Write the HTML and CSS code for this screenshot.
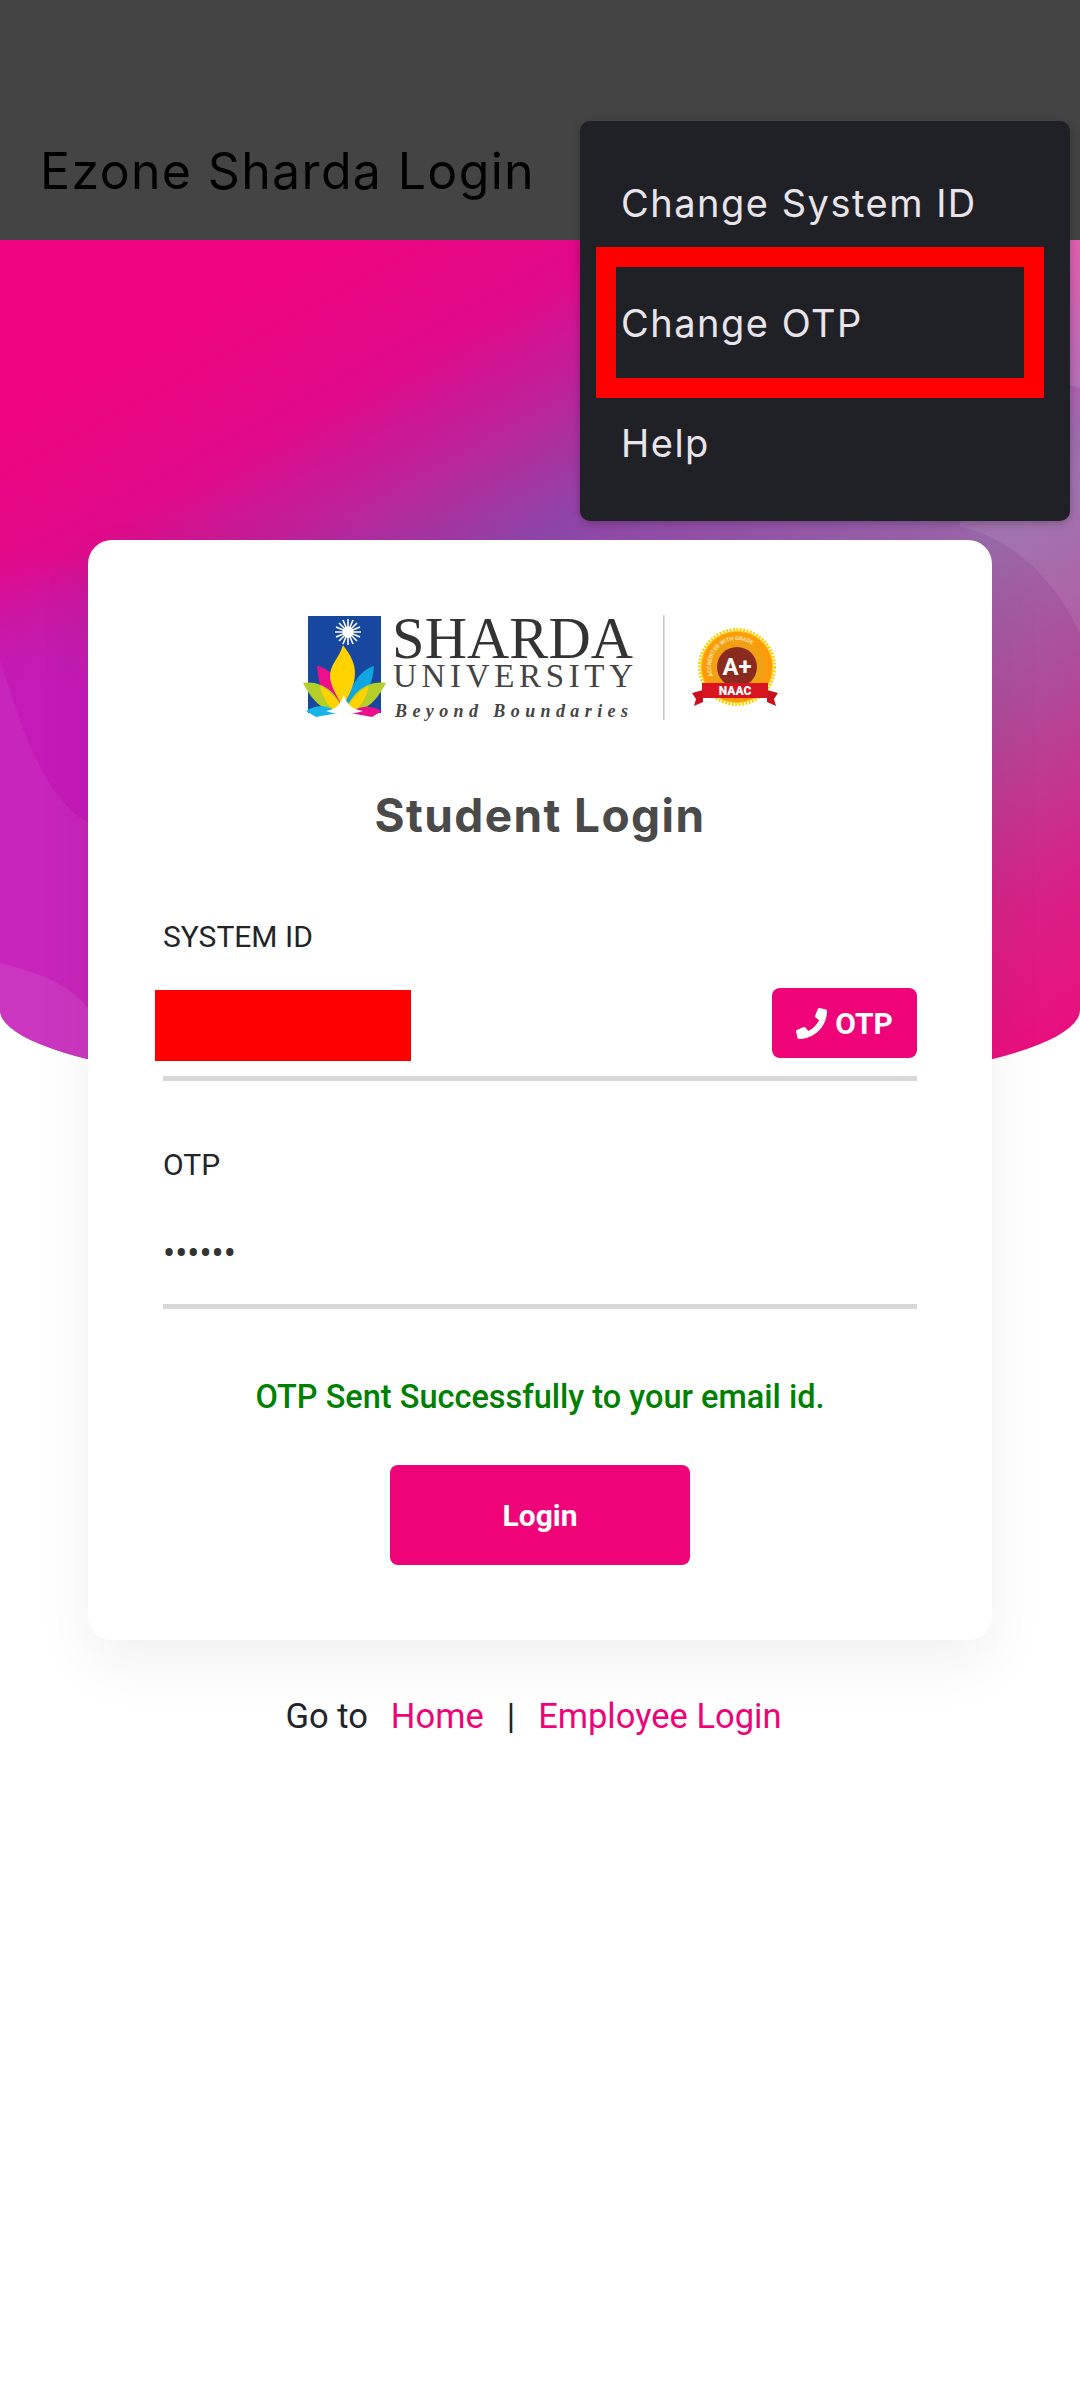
FILE: index.html
```html
<!DOCTYPE html>
<html lang="en">
<head>
  <meta charset="UTF-8" />
  <meta name="viewport" content="width=device-width, initial-scale=1.0" />
  <title>Ezone Sharda Login</title>
  <link rel="stylesheet" href="styles.css">
</head>
<body>

  <header class="topbar">
    <h1>Ezone Sharda Login</h1>
  </header>

  <!-- Curved background behind the card -->
  <div class="hero">
    <svg viewBox="0 0 1080 860" width="1080" height="860">
      <defs>
        <linearGradient id="heroBase" gradientUnits="userSpaceOnUse" x1="0" y1="0" x2="576" y2="1052">
          <stop offset="0.125" stop-color="#f0047f" />
          <stop offset="0.254" stop-color="#e00a8a" />
          <stop offset="0.33" stop-color="#c0209a" />
          <stop offset="0.43" stop-color="#8f45a8" />
          <stop offset="0.62" stop-color="#9a68a8" />
          <stop offset="0.75" stop-color="#b04a98" />
          <stop offset="0.9" stop-color="#d82085" />
          <stop offset="1" stop-color="#e8107f" />
        </linearGradient>
        <radialGradient id="magentaGlow" gradientUnits="userSpaceOnUse" cx="40" cy="660" r="350">
          <stop offset="0" stop-color="#c41ab8" />
          <stop offset="0.6" stop-color="#c41ab8" />
          <stop offset="1" stop-color="#c41ab8" stop-opacity="0" />
        </radialGradient>
        <radialGradient id="pinkCorner" gradientUnits="userSpaceOnUse" cx="1090" cy="0" r="190">
          <stop offset="0" stop-color="#e040a0" />
          <stop offset="1" stop-color="#e040a0" stop-opacity="0" />
        </radialGradient>
      </defs>
      <rect width="1080" height="860" fill="url(#heroBase)" />
      <rect width="1080" height="860" fill="url(#magentaGlow)" />
      <rect width="1080" height="860" fill="url(#pinkCorner)" />
      <path d="M0 420 C20 480 40 555 88 583 L88 860 L0 860 Z" fill="#fff" opacity="0.05" />
      <path d="M0 723 C40 733 70 745 88 768 L88 860 L0 860 Z" fill="#fff" opacity="0.08" />
      <path d="M960 287 C1020 300 1060 350 1080 393 L1080 0 L960 0 Z" fill="#fff" opacity="0.08" />
      <path d="M1040 140 C1060 142 1070 145 1080 148 L1080 0 L1040 0 Z" fill="#fff" opacity="0.1" />
    </svg>
  </div>

  <!-- Overflow menu -->
  <nav class="menu">
    <a href="#">Change System ID</a>
    <a href="#">Change OTP</a>
    <a href="#">Help</a>
    <div class="mark"></div>
  </nav>

  <main class="page">
    <section class="card">
      <svg class="logo" viewBox="295 605 490 120" width="490" height="120">
        <rect x="308" y="616" width="73" height="97" fill="#17479e" />
        <g stroke="#fff" stroke-width="1.6">
          <path d="M348 619V645M335 632H361M339 623L357 641M357 623L339 641M343 620L353 644M353 620L343 644M336 627L360 637M360 627L336 637" />
        </g>
        <circle cx="348" cy="632" r="5.5" fill="#fff" />
        <path d="M317 666 C332 668 342 685 344 708 L330 708 C322 695 318 680 317 666Z" fill="#ec0f8c" />
        <path d="M374 666 C360 670 350 685 345 708 L358 708 C368 695 373 680 374 666Z" fill="#0ea5e0" />
        <path d="M343 645 C350 655 358 665 354 682 C351 692 346 700 343 708 C340 700 332 690 330 678 C329 665 340 657 343 645Z" fill="#ffd200" />
        <path d="M303 683 C322 680 337 693 344 711 L326 709 C314 703 308 692 303 683Z" fill="#b5cf2a" />
        <path d="M386 683 C367 680 352 693 345 711 L363 709 C375 703 381 692 386 683Z" fill="#b5cf2a" />
        <path d="M320 686 C330 691 340 701 343 711 L332 709 C326 703 322 694 320 686Z" fill="#ffd200" />
        <path d="M369 686 C359 691 349 701 346 711 L357 709 C363 703 367 694 369 686Z" fill="#ffd200" />
        <path d="M306 711 C318 703 330 706 338 713 L316 717Z" fill="#18b4e8" />
        <path d="M382 711 C370 704 358 706 350 713 L372 717Z" fill="#ec0f8c" />
        <path d="M326 711 C338 709 341 702 344 695 C346 702 350 709 363 711 C352 715 336 715 326 711Z" fill="#fff" />
        <text class="logo-name" x="392" y="658" textLength="241" lengthAdjust="spacing">SHARDA</text>
        <text class="logo-uni" x="393" y="687" textLength="240" lengthAdjust="spacing">UNIVERSITY</text>
        <text class="logo-tag" x="395" y="717" textLength="233" lengthAdjust="spacing">Beyond Boundaries</text>
        <rect x="663" y="615" width="1.6" height="105" fill="#c9c9c9" />
        <circle cx="737" cy="667" r="36" fill="#ff9a0a" />
        <circle cx="737" cy="667" r="37" fill="none" stroke="#ffd200" stroke-width="4" stroke-dasharray="2 1.4" />
        <circle cx="737" cy="667" r="29" fill="#f0a012" />
        <circle cx="737" cy="667" r="20" fill="#8a2b20" />
        <path id="badgeArc" d="M713 676 A26 26 0 1 1 761 676" fill="none" />
        <text class="badge-ring"><textPath href="#badgeArc">ACCREDITED WITH GRADE</textPath></text>
        <text class="badge-grade" x="737" y="675" text-anchor="middle">A+</text>
        <path d="M692 693 L703 690 L703 702 L694 706 L696 699Z" fill="#c8101e" />
        <path d="M778 693 L767 690 L767 702 L776 706 L774 699Z" fill="#c8101e" />
        <rect x="702" y="683" width="66" height="15" fill="#d81420" />
        <text class="badge-name" x="735" y="695" text-anchor="middle">NAAC</text>
      </svg>

      <h2 class="card-title">Student Login</h2>

      <label class="field-label" for="systemId">SYSTEM ID</label>
      <div class="field">
        <input id="systemId" type="text" />
        <span class="redact"></span>
        <button class="otp-btn" type="button">
          <svg viewBox="0 0 512 512" width="31" height="31"><path fill="#fff" d="M493.4 24.6l-104-24c-11.3-2.6-22.9 3.3-27.5 13.9l-48 112c-4.2 9.8-1.4 21.3 6.9 28l60.6 49.6c-36 76.7-98.9 140.5-177.2 177.2l-49.6-60.6c-6.8-8.3-18.2-11.1-28-6.9l-112 48C3.9 366.5-2 378.1.6 389.4l24 104C27.1 504.2 36.7 512 48 512c256.1 0 464-207.5 464-464 0-11.2-7.7-20.9-18.6-23.4z"/></svg>
          OTP
        </button>
      </div>

      <label class="field-label second" for="otp">OTP</label>
      <div class="field">
        <input id="otp" type="password" value="123456" />
      </div>

      <p class="success">OTP Sent Successfully to your email id.</p>

      <button class="login-btn" type="button">Login</button>
    </section>

    <p class="links">
      <span>Go to</span>
      <a href="#">Home</a>
      <span>|</span>
      <a href="#">Employee Login</a>
    </p>
  </main>

</body>
</html>
```

FILE: styles.css
```css
body {
  margin: 0;
  width: 1080px;
  height: 2400px;
  position: relative;
  overflow: hidden;
  background: #fff;
  font-family: Roboto, sans-serif;
  color: #212529;
}

.topbar {
  height: 240px;
  box-sizing: border-box;
  background: #444;
  display: flex;
  align-items: flex-end;
  padding: 0 40px 39px;
}

.topbar h1 {
  margin: 0;
  font-family: Inter, sans-serif;
  font-size: 50px;
  line-height: 60px;
  font-weight: 400;
  letter-spacing: 1.35px;
  color: #000;
}

.hero {
  position: absolute;
  top: 240px;
  left: 0;
  width: 1080px;
  height: 860px;
  overflow: hidden;
  border-radius: 0 0 50% 50% / 0 0 90px 90px;
}

.hero svg {
  display: block;
}

/* Menu */
.menu {
  position: absolute;
  z-index: 10;
  top: 121px;
  left: 580px;
  width: 490px;
  height: 400px;
  box-sizing: border-box;
  padding: 22px 0 18px;
  background: #202027;
  border-radius: 10px;
  box-shadow: 0 2px 8px rgba(0, 0, 0, 0.25);
}

.menu a {
  display: flex;
  align-items: center;
  height: 120px;
  padding-left: 41px;
  font-family: Inter, sans-serif;
  font-size: 38px;
  letter-spacing: 1.5px;
  color: #e8e4ea;
  text-decoration: none;
}

.mark {
  position: absolute;
  top: 126px;
  left: 16px;
  width: 448px;
  height: 151px;
  box-sizing: border-box;
  border: 20px solid #f00;
}

/* Card */
.page {
  position: relative;
  padding-top: 300px;
}

.card {
  margin: 0 88px;
  height: 1100px;
  box-sizing: border-box;
  padding: 65px 75px 0;
  background: #fff;
  border-radius: 24px;
  box-shadow: 0 24px 60px rgba(0, 0, 0, 0.06);
}

.logo {
  display: block;
  margin: 0 auto;
}

.logo-name {
  font-family: "Liberation Serif", serif;
  font-size: 58.5px;
  fill: #333;
}

.logo-uni {
  font-family: "Liberation Serif", serif;
  font-size: 33px;
  fill: #444;
}

.logo-tag {
  font-family: "Liberation Serif", serif;
  font-size: 18px;
  font-weight: 700;
  font-style: italic;
  fill: #444;
}

.badge-ring {
  font-family: Roboto, sans-serif;
  font-size: 5.5px;
  font-weight: 700;
  fill: #ffe9b0;
}

.badge-grade {
  font-family: Roboto, sans-serif;
  font-size: 24px;
  font-weight: 700;
  fill: #fff;
}

.badge-name {
  font-family: Roboto, sans-serif;
  font-size: 12px;
  font-weight: 900;
  fill: #fff;
}

.card-title {
  margin: 60px 0 0;
  font-family: Inter, sans-serif;
  font-size: 46px;
  line-height: 60px;
  font-weight: 700;
  letter-spacing: 1.4px;
  text-align: center;
  color: #4a4a4a;
}

.field-label {
  display: block;
  margin-top: 72px;
  font-size: 30px;
  line-height: 40px;
}

.field-label.second {
  margin-top: 64px;
}

.field {
  position: relative;
  display: flex;
  justify-content: flex-end;
  align-items: flex-start;
  height: 96px;
  box-sizing: border-box;
  margin-top: 28px;
  padding-top: 3px;
  border-bottom: 5px solid #d8d8d8;
}

.field input {
  flex: 1;
  min-width: 0;
  height: 76px;
  padding: 0;
  border: 0;
  outline: 0;
  background: transparent;
  font-family: Roboto, sans-serif;
  font-size: 36px;
  color: #333;
}

.redact {
  position: absolute;
  top: 5px;
  left: -8px;
  width: 256px;
  height: 71px;
  background: #f00;
}

.otp-btn {
  display: flex;
  align-items: center;
  justify-content: center;
  gap: 8px;
  width: 145px;
  height: 70px;
  padding: 0;
  border: 0;
  border-radius: 8px;
  background: #ef0378;
  color: #fff;
  font-family: Roboto, sans-serif;
  font-size: 30px;
  font-weight: 700;
}

.success {
  margin: 68px 0 0;
  font-size: 32.5px;
  line-height: 40px;
  font-weight: 500;
  text-align: center;
  color: #008000;
}

.login-btn {
  display: block;
  width: 300px;
  height: 100px;
  margin: 48px auto 0;
  border: 0;
  border-radius: 8px;
  background: #ef0378;
  color: #fff;
  font-family: Roboto, sans-serif;
  font-size: 30px;
  font-weight: 700;
}

.links {
  display: flex;
  justify-content: center;
  gap: 23px;
  margin: 54px 0 0;
  padding-right: 13px;
  font-size: 34.5px;
  line-height: 44px;
}

.links a {
  color: #ef0378;
  text-decoration: none;
}
```
